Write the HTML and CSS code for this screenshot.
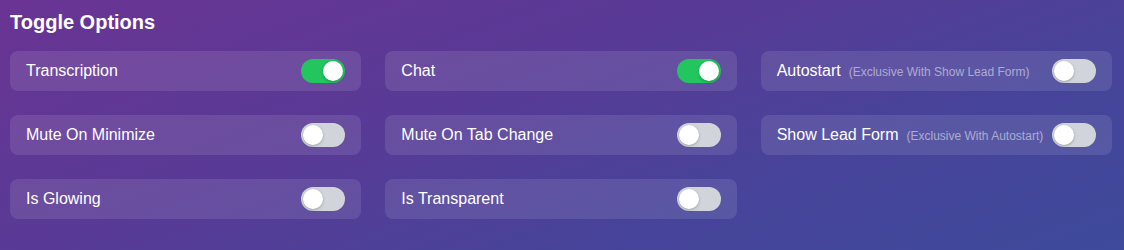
FILE: index.html
```html
<!DOCTYPE html>
<html>
<head>
<meta charset="utf-8">
<link rel="stylesheet" href="styles.css">
</head>
<body>
<div class="panel">
  <h2 class="title">Toggle Options</h2>
  <div class="grid">
    <div class="item"><span class="label">Transcription</span><span class="switch on"><span class="knob"></span></span></div>
    <div class="item"><span class="label">Chat</span><span class="switch on"><span class="knob"></span></span></div>
    <div class="item"><span class="label">Autostart<span class="note">(Exclusive With Show Lead Form)</span></span><span class="switch"><span class="knob"></span></span></div>
    <div class="item"><span class="label">Mute On Minimize</span><span class="switch"><span class="knob"></span></span></div>
    <div class="item"><span class="label">Mute On Tab Change</span><span class="switch"><span class="knob"></span></span></div>
    <div class="item"><span class="label">Show Lead Form<span class="note">(Exclusive With Autostart)</span></span><span class="switch"><span class="knob"></span></span></div>
    <div class="item"><span class="label">Is Glowing</span><span class="switch"><span class="knob"></span></span></div>
    <div class="item"><span class="label">Is Transparent</span><span class="switch"><span class="knob"></span></span></div>
  </div>
</div>
</body>
</html>
```

FILE: styles.css
```css
html, body {
  margin: 0;
  padding: 0;
  width: 1124px;
  height: 250px;
  overflow: hidden;
}
body {
  background: linear-gradient(160deg, #6a3494 0%, #583a96 40%, #47449a 70%, #3e4a9b 100%);
  font-family: "Liberation Sans", Arial, sans-serif;
  color: #fff;
}
.panel {
  padding: 8px 12px 10px 10px;
}
.title {
  margin: 0 0 15px 0;
  font-size: 20px;
  line-height: 28px;
  font-weight: bold;
}
.grid {
  display: grid;
  grid-template-columns: 1fr 1fr 1fr;
  column-gap: 24px;
  row-gap: 24px;
}
.item {
  height: 40px;
  box-sizing: border-box;
  display: flex;
  align-items: center;
  justify-content: space-between;
  padding: 0 16px;
  background: rgba(255, 255, 255, 0.1);
  border-radius: 8px;
}
.label {
  font-size: 16px;
  color: #fff;
  display: flex;
  align-items: baseline;
}
.note {
  font-size: 12px;
  color: rgba(255, 255, 255, 0.5);
  margin-left: 8px;
}
.switch {
  width: 44px;
  height: 24px;
  border-radius: 12px;
  background: #d1d5db;
  box-sizing: border-box;
  padding: 2px;
  display: flex;
  justify-content: flex-start;
}
.switch.on {
  background: #22c55e;
  justify-content: flex-end;
}
.knob {
  width: 20px;
  height: 20px;
  border-radius: 50%;
  background: #fff;
  box-shadow: 0 1px 3px rgba(0, 0, 0, 0.25);
}
```
